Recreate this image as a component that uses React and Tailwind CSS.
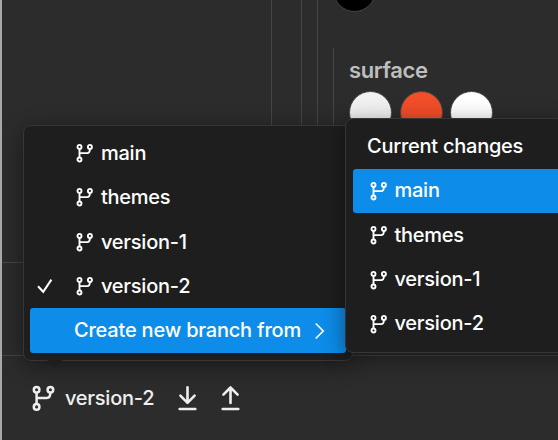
import React from 'react';

function BranchIcon({ large = false }) {
  return large ? (
    <svg width="26" height="28" viewBox="0 0 26 28" fill="none" stroke="#efefef" strokeWidth="2.5" className="shrink-0">
      <circle cx="6.6" cy="5.7" r="2.8" />
      <circle cx="20.4" cy="5.7" r="2.8" />
      <circle cx="6.6" cy="22.9" r="2.8" />
      <path d="M6.6 8.5V20.1M6.6 14H16.6Q20.4 14 20.4 8.5" />
    </svg>
  ) : (
    <svg width="18" height="20" viewBox="0 0 18 20" fill="none" stroke="currentColor" strokeWidth="1.9" className="shrink-0">
      <circle cx="3.5" cy="3.9" r="2" />
      <circle cx="13.9" cy="3.9" r="2" />
      <circle cx="3.5" cy="16.5" r="2" />
      <path d="M3.5 5.9V14.5M3.5 10.1H11.1Q13.9 10.1 13.9 5.9" />
    </svg>
  );
}

function BranchItem({ name, checked = false }) {
  return (
    <div className="flex h-[44.3px] items-center">
      <div className="flex w-[46px] items-center pl-[6.5px]">
        {checked && (
          <svg width="16" height="18" viewBox="0 0 16 18" fill="none" stroke="white" strokeWidth="2">
            <path d="M1 9.2L6.2 14.8L14.4 2.6" />
          </svg>
        )}
      </div>
      <BranchIcon />
      <span className="ml-[7px]">{name}</span>
    </div>
  );
}

function SubItem({ name, active = false }) {
  return (
    <div className={`flex h-[44.3px] items-center pl-[17px] ${active ? 'rounded-l-[3px] bg-[#0d8ce9]' : ''}`}>
      <BranchIcon />
      <span className="mb-[1.4px] ml-[6.5px]">{name}</span>
    </div>
  );
}

function SyncIcon({ up = false }) {
  return (
    <svg width="20" height="28" viewBox="0 0 20 28" fill="none" stroke="#efefef" strokeWidth="2.6" strokeLinecap="round" strokeLinejoin="round">
      <path d={up ? 'M10.5 19V3.5M3.4 10.6L10.5 3.5L17.6 10.6' : 'M10.5 3.2V18.5M3.4 11.7L10.5 18.8L17.6 11.7'} />
      <path d="M2.7 25H18.3" />
    </svg>
  );
}

export default function App() {
  return (
    <div className="relative flex h-[440px] w-[558px] flex-col overflow-hidden border-l-2 border-[#a9a9a9] bg-[#2c2c2c] font-['Inter',sans-serif] text-[20px] leading-[28px] font-[450] tracking-[-0.25px] whitespace-nowrap text-white">
      <div className="flex h-[356px] shrink-0 border-b border-[#454545]">
        <div className="w-[270px] border-r border-[#454545]">
          <div className="h-[263px] border-b border-[#454545]" />
        </div>
        <div className="w-[30px] border-r border-[#454545]" />
        <div className="w-4 border-r border-[#454545]" />
        <div className="flex-1 pl-[15px]">
          <div className="h-12 overflow-hidden">
            <div className="-mt-[31px] h-[43px] w-[43px] rounded-full border border-[#454545] bg-black" />
          </div>
          <div className="h-[307px] border-l border-[#454545] pt-2 pl-[15px]">
            <div className="text-[22px] font-semibold tracking-[-0.4px] text-[#bebebe]">surface</div>
            <div className="mt-[7px] flex gap-[7.5px]">
              <div className="h-[43px] w-[43px] rounded-full border border-[#454545] bg-[#f1f1f1]" />
              <div className="h-[43px] w-[43px] rounded-full border border-[#454545] bg-[#f24e29]" />
              <div className="h-[43px] w-[43px] rounded-full border border-[#454545] bg-white" />
            </div>
          </div>
        </div>
      </div>

      <div className="flex flex-1 items-center pl-7 text-[#efefef]">
        <BranchIcon large />
        <span className="ml-[9px] w-[88px]">version-2</span>
        <div className="ml-[24px] flex gap-[23px]">
          <SyncIcon />
          <SyncIcon up />
        </div>
      </div>

      <div className="absolute top-[125px] left-[21px] h-[236px] w-[330px] rounded-[8px] border border-[#363636] bg-[#1e1e1e] px-[6px] pt-[5px] shadow-[0_5px_22px_rgba(0,0,0,0.45)]">
        <BranchItem name="main" />
        <BranchItem name="themes" />
        <BranchItem name="version-1" />
        <BranchItem name="version-2" checked />
        <div className="flex h-[45px] w-[316px] items-center rounded-[3px] bg-[#0d8ce9] pl-11">
          <span className="mb-[1px] w-[227px] tracking-[-0.2px]">Create new branch from</span>
          <svg width="12" height="18" viewBox="0 0 12 18" fill="none" stroke="white" strokeWidth="1.7" className="ml-[13px]">
            <path d="M1.7 1.5L9.2 9L1.7 16.5" />
          </svg>
        </div>
        <div className="absolute top-[234px] left-[23px] h-0 w-0 border-x-[8px] border-t-[7px] border-x-transparent border-t-[#1e1e1e]" />
      </div>

      <div className="absolute top-[118px] left-[343px] h-[235px] w-[230px] rounded-[8px] border border-[#363636] bg-[#1e1e1e] pt-[5px] pl-[7px] shadow-[0_5px_22px_rgba(0,0,0,0.45)]">
        <div className="flex h-[45px] items-center pb-[2px] pl-[14px]">Current changes</div>
        <SubItem name="main" active />
        <SubItem name="themes" />
        <SubItem name="version-1" />
        <SubItem name="version-2" />
      </div>
    </div>
  );
}
